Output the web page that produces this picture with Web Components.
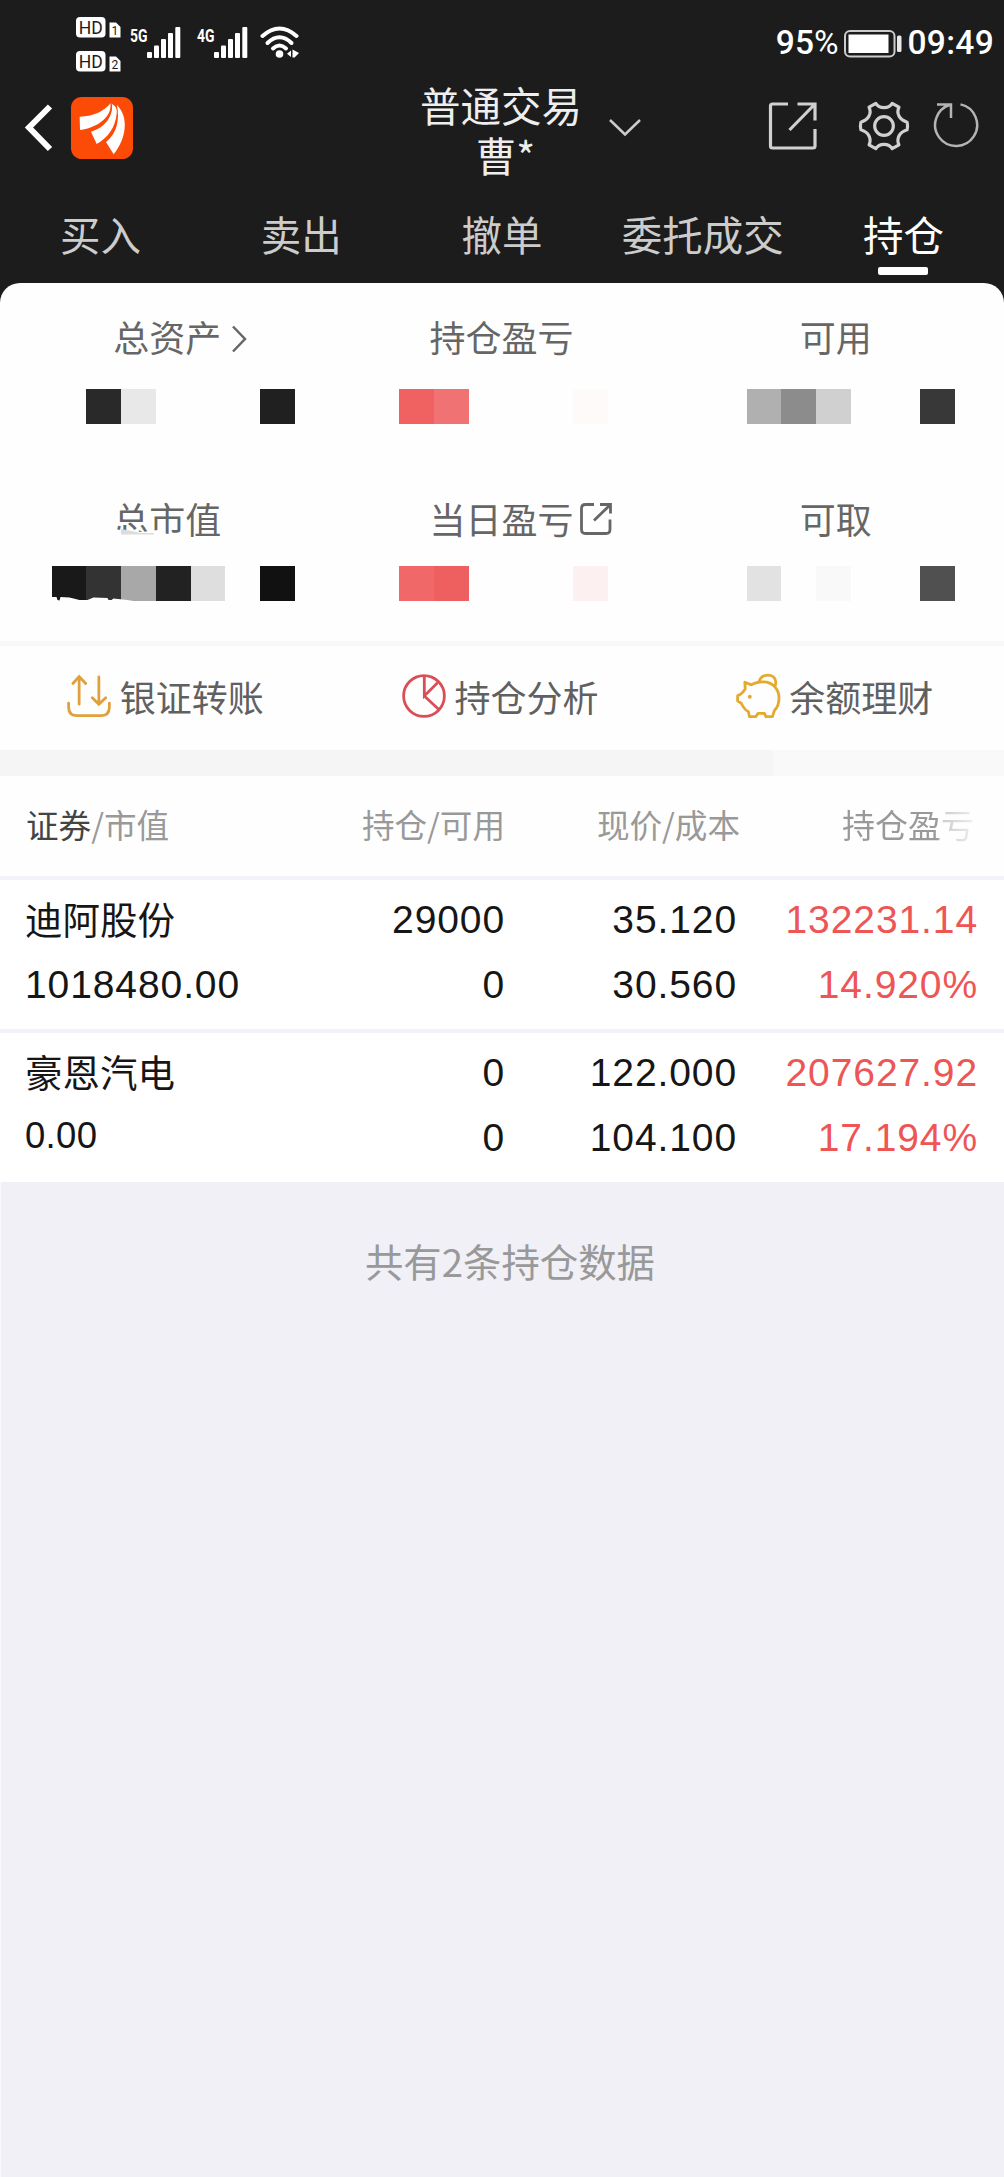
<!DOCTYPE html>
<html lang="zh-CN">
<head>
<meta charset="utf-8">
<title>持仓</title>
<style>
    html, body {
        margin: 0;
        background: #f0f0f6;
        font-family: "Noto Sans CJK SC", sans-serif;
    }
</style>
</head>
<body>
<trade-page></trade-page>

<script>
(function () {
    function define(name, html, setup) {
        const tmpl = document.createElement('template');
        tmpl.innerHTML = html;
        customElements.define(name, class extends HTMLElement {
            constructor() {
                super();
                this.attachShadow({mode: 'open'}).appendChild(tmpl.content.cloneNode(true));
            }
            connectedCallback() {
                if (setup) setup(this, this.shadowRoot);
            }
        });
    }

    define('hd-badge', `
        <style>
            :host { display: block; height: 21px; }
            svg { display: block; overflow: visible; }
            text { font-family: Roboto, sans-serif; font-weight: 400; fill: #1c1c1c; }
        </style>
        <svg width="46" height="21" viewBox="0 0 46 21">
            <rect x="0" y="0" width="29.500" height="20.500" rx="4" fill="#fff"/>
            <path d="M33.500 5.500H40l4.500 4.500v10.500h-11z" fill="#fff"/>
            <text x="2.800" y="16.500" font-size="18" textLength="24" lengthAdjust="spacingAndGlyphs">HD</text>
            <text class="sim" x="35.600" y="18" font-size="12"></text>
        </svg>
    `, (el, root) => {
        root.querySelector('.sim').textContent = el.getAttribute('sim');
    });

    define('signal-bars', `
        <style>
            :host { display: block; width: 50px; height: 32px; }
            svg { display: block; overflow: visible; }
            text { font-family: Roboto, sans-serif; font-weight: 700; fill: #fff; }
        </style>
        <svg width="51" height="32" viewBox="0 0 51 32">
            <text x="0" y="14.500" font-size="19" textLength="17.500" lengthAdjust="spacingAndGlyphs"></text>
            <g fill="#fff">
                <rect x="17" y="25" width="5" height="6" rx="1"/>
                <rect x="24" y="18.500" width="5" height="12.500" rx="1"/>
                <rect x="31" y="12" width="5" height="19" rx="1"/>
                <rect x="38" y="6" width="5" height="25" rx="1"/>
                <rect x="45.300" y="0" width="5" height="31" rx="1"/>
            </g>
        </svg>
    `, (el, root) => {
        root.querySelector('text').textContent = el.getAttribute('net');
    });

    define('status-bar', `
        <style>
            :host {
                display: flex;
                height: 75px;
                padding: 17px 10px 0 76px;
                box-sizing: border-box;
                color: #fff;
                font: 500 33.5px/52px Roboto, sans-serif;
            }
            .sims { display: grid; gap: 12.500px; align-content: start; width: 54px; }
            signal-bars { margin: 10px 17px 0 0; }
            .wifi { margin: 9px auto 0 -4px; }
            .battery { margin: 13px 5px 0 5px; }
            .time { letter-spacing: .3px; }
            .pct i { font-style: normal; font-weight: 400; }
            svg { display: block; flex: none; }
        </style>
        <div class="sims"><hd-badge sim="1"></hd-badge><hd-badge sim="2"></hd-badge></div>
        <signal-bars net="5G"></signal-bars>
        <signal-bars net="4G"></signal-bars>
        <svg class="wifi" width="40" height="33" viewBox="0 0 40 33">
            <g fill="none" stroke="#fff" stroke-width="4" stroke-linecap="round">
                <path d="M2.500 10Q19.500-5 36.500 10"/>
                <path d="M7.500 17Q19.500 5.500 31.500 17"/>
                <path d="M13 22.500Q19.500 16.500 26 22.500"/>
            </g>
            <circle cx="19.500" cy="28" r="3.800" fill="#fff"/>
            <path d="M31 24.500v6.500l-4-3.200zM32.500 23.500l6.500 3.500-4.500 4.500h-2z" fill="#fff"/>
        </svg>
        <span class="pct">95<i>%</i></span>
        <svg class="battery" width="59" height="28" viewBox="0 0 59 28">
            <rect x="1" y="1" width="49.500" height="25.500" rx="5" fill="none" stroke="#ccc" stroke-width="2"/>
            <rect x="4.500" y="4.500" width="40" height="18.500" fill="#fff"/>
            <rect x="53" y="5.500" width="4.500" height="16.500" rx="1.500" fill="#e8e8e8"/>
        </svg>
        <span class="time">09:49</span>
    `);

    define('nav-bar', `
        <style>
            :host {
                display: grid;
                grid-template-columns: 1fr auto 1fr;
                height: 111px;
                color: #eee;
            }
            svg { display: block; fill: none; }
            .left { display: flex; padding: 22px 0 0 23px; gap: 18px; align-items: flex-start; }
            .title { font-size: 40.5px; line-height: 51px; text-align: center; padding: 4px 2px 0 0; }
            .title div + div { padding-left: 9px; margin-top: -1px; }
            .right { display: flex; padding-top: 26px; align-items: flex-start; }
            .down { margin: 16px 0 0 24px; }
            .open { margin: 0 0 0 auto; }
            .gear { margin: -1px 0 0 40px; }
            .reload { margin: 0 25px 0 23px; }
        </style>
        <div class="left">
            <svg width="30" height="62" viewBox="0 0 30 62" stroke="#fff" stroke-width="6">
                <path d="M27 9.500 6 30.500 27 52"/>
            </svg>
            <svg width="62" height="62" viewBox="0 0 186 186">
                <rect width="186" height="186" rx="32" fill="#fc4a07"/>
                <g fill="#fff">
                    <path d="M26 59C70 58 99 42 119 19C123 58 83 92 27 99Z"/>
                    <path d="M60 104C102 91 126 60 122 20C135 27 139 36 137 51C132 93 111 122 77 141Z"/>
                    <path d="M138 24C174 61 167 123 128 172L105 135C139 109 146 68 138 24Z"/>
                </g>
                <path d="M121 22C124 60 96 90 56 101" fill="none" stroke="#fc4a07" stroke-width="4"/>
            </svg>
        </div>
        <div class="title"><div>普通交易</div><div>曹*</div></div>
        <div class="right">
            <svg class="down" width="34" height="36" viewBox="0 0 34 36" stroke="#ccc" stroke-width="2.500">
                <path d="M2 3 17 17.500 32 3"/>
            </svg>
            <svg class="open" width="50" height="50" viewBox="0 0 50 50" stroke="#d0d0d0" stroke-width="3.200">
                <path d="M20 3H4.500Q2.500 3 2.500 5V45Q2.500 47 4.500 47H45Q47 47 47 45V28M29.500 3H47V19.500M21.500 29 46 4"/>
            </svg>
            <svg class="gear" width="52" height="52" viewBox="-27 -27 54 54" stroke="#d0d0d0" stroke-width="3.300">
                <path d="M-8.500-23.500C-5-17.500 5-17.500 8.500-23.500L15.500-19.500C12.500-13 16-6.500 24-4Q25 0 24 4C16 6.500 12.500 13 15.500 19.500L8.500 23.500C5 17.500-5 17.500-8.500 23.500L-15.500 19.500C-12.500 13-16 6.500-24 4Q-25 0-24-4C-16-6.500-12.500-13-15.500-19.500Z" stroke-linejoin="round"/>
                <circle r="9.700"/>
            </svg>
            <svg class="reload" width="46" height="48" viewBox="-23 -24 46 48" stroke="#b4b4b4" stroke-width="2.500">
                <path d="M4.500-20.600A21 21 0 1 1-5.500-20.300M-19-20.500H-5V-7"/>
            </svg>
        </div>
    `);

    define('tab-item', `
        <style>
            :host {
                flex: 1;
                display: flex;
                flex-direction: column;
                align-items: center;
                color: #ccc;
                font-size: 40.5px;
                line-height: 60px;
                padding-top: 18px;
            }
            :host([active]) { color: #fff; }
            :host([active])::after {
                content: '';
                width: 50px;
                height: 8px;
                margin: 3px 1px 0 0;
                border-radius: 2px;
                background: #fff;
            }
        </style>
        <slot></slot>
    `);

    // each cell is "column:colour" on a 26 column grid
    define('mosaic-strip', `
        <style>
            :host {
                display: grid;
                grid-template-columns: repeat(26, 34.750px);
                margin-left: 51.500px;
                height: 35.600px;
            }
            :host([torn]) {
                clip-path: polygon(0 0, 100% 0, 100% 100%, 85px 100%, 76px 34px, 62px 32.500px, 60px 34px, 57px 34px, 56px 32px, 42px 31.500px, 36px 34px, 28px 34px, 18px 31.500px, 9px 31px, 8px 34.500px, 6px 34px, 5px 31px, 0 31px);
            }
        </style>
    `, (el, root) => {
        el.getAttribute('cells').split(' ').forEach(cell => {
            const [col, color] = cell.split(':');
            const div = document.createElement('div');
            div.style.gridArea = `1 / ${Number(col) + 1}`;
            div.style.background = color;
            root.appendChild(div);
        });
    });

    define('sum-label', `
        <style>
            :host {
                position: relative;
                display: flex;
                justify-content: center;
                color: #666;
                font-size: 36px;
                line-height: 52px;
            }
            /* trailing icons do not shift the centred label */
            .icon { width: 0; overflow: visible; }
            ::slotted(svg) { display: block; fill: none; }
        </style>
        <slot></slot><div class="icon"><slot name="icon"></slot></div>
    `);

    define('account-summary', `
        <style>
            :host {
                display: block;
                height: 358px;
                box-sizing: border-box;
                padding-top: 27px;
                background: #fefefe;
                border-radius: 20px 20px 0 0;
            }
            .row { display: grid; grid-template-columns: repeat(3, 1fr); margin: 0 1px 26.600px 0; }
            .second { margin-top: 67.500px; margin-bottom: 22.200px; }
            .wipe { position: absolute; left: 112px; top: 34px; }
        </style>
        <div class="row">
            <sum-label>总资产<svg slot="icon" width="30" height="52" stroke="#666" stroke-width="2.500"><path d="M12 16.500 24 29 12 41.500"/></svg></sum-label>
            <sum-label>持仓盈亏</sum-label>
            <sum-label>可用</sum-label>
        </div>
        <mosaic-strip cells="1:#292929 2:#e8e8e8 6:#202020 10:#f06262 11:#f07272 15:#fffafa 20:#b0b0b0 21:#8c8c8c 22:#d0d0d0 25:#383838"></mosaic-strip>
        <div class="row second">
            <sum-label>总市值<svg class="wipe" width="72" height="16"><path d="M0 2 8 4 30 6 46 4 46 7 70 9 68 14 0 14Z" fill="#fefefe"/><path d="M9 3 20 5 28 7 42 7 42 8.500 9 8.500Z" fill="#dcdcdc"/></svg></sum-label>
            <sum-label>当日盈亏<svg slot="icon" width="44" height="52" viewBox="1 -0.500 44 52" stroke="#666" stroke-width="2.800"><path d="M21 12H12.500Q8.500 12 8.500 16V37Q8.500 41 12.500 41H33Q37 41 37 37V27M27 12H37.500V21M21 28 37 12.500"/></svg></sum-label>
            <sum-label>可取</sum-label>
        </div>
        <mosaic-strip torn cells="0:#191919 1:#333 2:#a8a8a8 3:#222 4:#dedede 6:#111 10:#f06868 11:#ee5f5f 15:#fdf0f0 20:#e2e2e2 22:#f9f9f9 25:#505050"></mosaic-strip>
    `);

    define('quick-action', `
        <style>
            :host {
                display: flex;
                justify-content: center;
                gap: 8px;
                color: #606060;
                font-size: 36px;
                line-height: 52px;
            }
            ::slotted(svg) { display: block; fill: none; margin-top: 3px; }
        </style>
        <slot name="icon"></slot><span><slot></slot></span>
    `);

    define('quick-actions', `
        <style>
            :host {
                display: grid;
                grid-template-columns: repeat(3, 334.700px);
                height: 104px;
                padding-top: 24px;
                margin-left: -2.500px;
                box-sizing: border-box;
                background: #fefefe;
            }
        </style>
        <quick-action>
            <svg slot="icon" width="46" height="46" viewBox="0 0 140 140" stroke="#e0a03c" stroke-width="8.500" stroke-linecap="round">
                <path d="M40 95V12M21 32 40 11 60 32M100 12V94M80 75 100 95 121 75"/>
                <path d="M8 92V104Q8 130 35 130H105Q132 130 132 104V92"/>
            </svg>银证转账
        </quick-action>
        <quick-action>
            <svg slot="icon" width="46" height="46" viewBox="0 0 140 140" stroke="#da4f57" stroke-width="8.500">
                <circle cx="70" cy="70" r="62"/>
                <path d="M71 8V70L112 29M71 70 116 112"/>
            </svg>持仓分析
        </quick-action>
        <quick-action>
            <svg slot="icon" width="46" height="46" viewBox="-2 0 140 140" stroke="#e4aa2b" stroke-width="8.500" stroke-linejoin="round">
                <path d="M28 28 48 36Q62 27 84 27C114 27 132 51 132 76Q132 100 118 114L112 133H92L88 123H68L61 133H42L39 118Q26 111 17 92L6 85V69Q19 65 29 49Z"/>
                <path d="M71 27C77-1 119 0 122 26Q123 34 119 41"/>
                <circle cx="43" cy="72" r="6" fill="#e4aa2b" stroke="none"/>
            </svg>余额理财
        </quick-action>
    `);

    define('position-head', `
        <style>
            :host {
                display: grid;
                grid-template-columns: 200px 279px 235px 234px;
                height: 100px;
                padding: 23px 0 0 26px;
                box-sizing: border-box;
                background: #fefefe;
                color: #999;
                font-size: 32.6px;
                line-height: 50px;
                text-align: right;
            }
            .name { text-align: left; }
            b { font-weight: 400; color: #444; }
            .fade {
                color: transparent;
                font-size: 33px;
                background: linear-gradient(90deg, #999 72%, #ccc 76%, #eee 100%);
                background-clip: text;
                -webkit-background-clip: text;
                justify-self: end;
            }
        </style>
        <span class="name"><b>证券</b>/市值</span>
        <span>持仓/可用</span>
        <span>现价/成本</span>
        <span class="fade">持仓盈亏</span>
    `);

    define('position-row', `
        <style>
            :host {
                display: grid;
                grid-template-columns: 260px 220px 232px 241px;
                grid-auto-rows: 65px;
                padding: 7px 0 12px 25px;
                background: #fff;
                border-top: 4.500px solid #f2f2f8;
                color: #161616;
                font: 39px/65px "Liberation Sans", sans-serif;
                letter-spacing: .900px;
                text-align: right;
            }
            .name { font: 37.5px/61px "Noto Sans CJK SC", sans-serif; letter-spacing: 0; }
            .left { text-align: left; }
            .gain { color: #e55; }
            :host([flat]) .value { font-size: 36.5px; line-height: 62px; letter-spacing: .3px; }
        </style>
        <span class="left name"></span><span></span><span></span><span class="gain"></span>
        <span class="left value"></span><span></span><span></span><span class="gain"></span>
    `, (el, root) => {
        const values = el.getAttribute('values').split(' ');
        root.querySelectorAll('span').forEach((span, i) => {
            span.textContent = values[i];
        });
    });

    define('trade-page', `
        <style>
            :host {
                display: block;
                width: 1004px;
                min-height: 2177px;
                background: #f0f0f6;
                box-shadow: inset 1px 0 #fafafc;
            }
            .top { background: #1c1c1c; }
            nav { display: flex; height: 97px; }
            .line { height: 5px; background: #f8f8f8; }
            .band { height: 26px; background: linear-gradient(90deg, #f5f5f5 77%, #f9f9f9 77%); }
            .empty {
                padding-top: 48px;
                text-align: center;
                color: #999;
                font-size: 38.4px;
                line-height: 60px;
                padding-left: 16px;
            }
        </style>
        <div class="top">
            <status-bar></status-bar>
            <nav-bar></nav-bar>
            <nav>
                <tab-item>买入</tab-item>
                <tab-item>卖出</tab-item>
                <tab-item>撤单</tab-item>
                <tab-item>委托成交</tab-item>
                <tab-item active>持仓</tab-item>
            </nav>
            <account-summary></account-summary>
        </div>
        <div class="line"></div>
        <quick-actions></quick-actions>
        <div class="band"></div>
        <position-head></position-head>
        <position-row values="迪阿股份 29000 35.120 132231.14 1018480.00 0 30.560 14.920%"></position-row>
        <position-row flat values="豪恩汽电 0 122.000 207627.92 0.00 0 104.100 17.194%"></position-row>
        <div class="empty">共有2条持仓数据</div>
    `);
})();
</script>
</body>
</html>
